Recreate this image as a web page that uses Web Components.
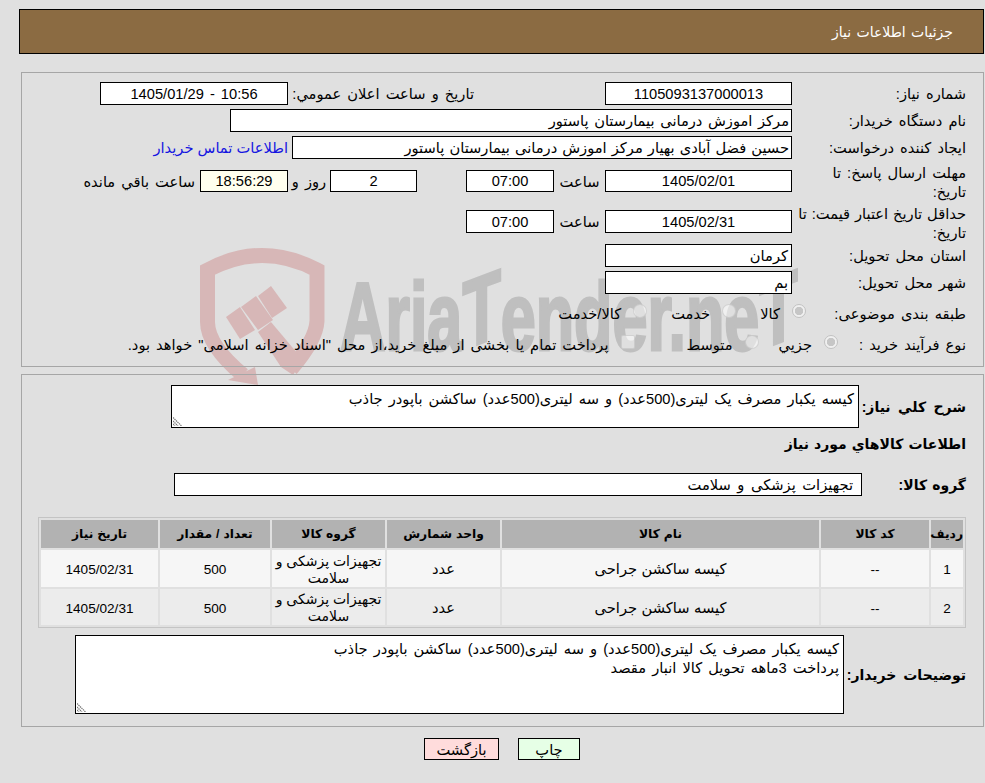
<!DOCTYPE html>
<html lang="fa"><head><meta charset="utf-8"><title>جزئیات اطلاعات نیاز</title>
<style>
html{background:#e0e0e0}
body{margin:0;width:985px;height:783px;overflow:hidden;font:14.67px "Liberation Sans","DejaVu Sans",sans-serif;color:#000}
</style></head><body>
<tender-page></tender-page>
<script>
const F=`"Liberation Sans","DejaVu Sans",sans-serif`;
class TField extends HTMLElement{
  constructor(){super();const s=this.attachShadow({mode:'open'});
  s.innerHTML=`<style>:host{display:flex;flex:none;box-sizing:border-box;height:23px;border:1px solid #000;background:#fff;align-items:center;justify-content:center;font-size:14.67px;padding:0 2px;white-space:nowrap;overflow:hidden}
  :host([start]){justify-content:flex-start}:host([cream]){background:#ffffee}</style><slot></slot>`}
}
customElements.define('t-field',TField);
class TArea extends HTMLElement{
  constructor(){super();const s=this.attachShadow({mode:'open'});
  s.innerHTML=`<style>:host{display:block;flex:none;box-sizing:border-box;border:1px solid #000;background:#fff;position:relative;padding:4px 4px 3px;line-height:19px;font-size:14.67px;white-space:nowrap}
  svg{position:absolute;left:1px;bottom:1px}</style><slot></slot>
  <svg width="10" height="10" viewBox="0 0 10 10"><path d="M0 1.5l8.5 8.5M0 5l5 5M0 8l2 2" stroke="#777" stroke-width="1.2" fill="none" stroke-dasharray="1.4 .7"/></svg>`}
}
customElements.define('t-area',TArea);
class TRadio extends HTMLElement{
  constructor(){super();const s=this.attachShadow({mode:'open'});
  s.innerHTML=`<style>:host{display:inline-flex;flex:none;align-items:center;gap:12px;font-size:14.67px;white-space:nowrap}
  i{display:block;flex:none;box-sizing:border-box;width:14px;height:14px;border-radius:50%;margin-bottom:5px;border:1px solid rgba(185,185,185,.55);background:rgba(255,255,255,.5)}
  :host([checked]) i{border:1.5px solid #c2c2c2;background:radial-gradient(circle,#c6c6c6 0 3.9px,#f0f0f0 4.5px)}
  :host([square]) i{border-radius:2px}</style><i></i><span><slot></slot></span>`}
}
customElements.define('t-radio',TRadio);
class TButton extends HTMLElement{
  constructor(){super();const s=this.attachShadow({mode:'open'});
  s.innerHTML=`<style>:host{display:flex;align-items:center;justify-content:center;box-sizing:border-box;height:22px;border:1px solid #000;background:#e6ffe6;font-size:14.67px}
  :host([red]){background:#ffdcdc}</style><slot></slot>`}
}
customElements.define('t-button',TButton);
class TWatermark extends HTMLElement{
  constructor(){super();const s=this.attachShadow({mode:'open'});
  s.innerHTML=`<style>:host{position:absolute;z-index:-1;left:195px;top:245px;width:600px;height:145px;display:block;pointer-events:none;direction:ltr;word-spacing:0}
  svg{position:absolute;left:0;top:0}
  .t{position:absolute;left:145px;top:24px;font:bold 96px/96px "Liberation Sans",sans-serif;color:#bfbfbf;-webkit-text-stroke:3px #bfbfbf;transform:scaleX(.655);transform-origin:left top;white-space:nowrap}
  b{display:inline-block;transform:skewY(-14deg);transform-origin:left bottom}</style>
  <svg width="140" height="145" viewBox="0 0 140 145"><g fill="none" stroke="#d7b7b7" stroke-width="15"><path d="M48 130Q12 100 12.5 76V25Q67 -4 122 25V76Q121 95 96 124"/></g>
  <g fill="#d7b7b7"><path d="M33 135L60 122L63 140Z"/><path d="M63 87L76 77L108 115L98 130L86 122Z"/><path d="M31 72L45 62L60 85L45 94Z"/><path d="M46 62L61 51L78 75L63 85Z"/><path d="M63 51L76 41L92 63L77 73Z"/></g></svg>
  <div class="t">Aria<b>T</b>ender.ne<b>T</b></div>`}
}
customElements.define('t-watermark',TWatermark);
class TGoods extends HTMLElement{
  constructor(){super();const s=this.attachShadow({mode:'open'});
  const rows=[1,2].map((n,i)=>`<tr class="r${i}"><td class="n">${n}</td><td class="n">--</td><td>کیسه ساکشن جراحی</td><td>عدد</td><td class="g">تجهیزات پزشکی و سلامت</td><td class="n">500</td><td class="n">1405/02/31</td></tr>`).join('');
  s.innerHTML=`<style>:host{display:block;word-spacing:.5px}
  table{width:928px;box-sizing:border-box;border-collapse:separate;border-spacing:2px;border:1px solid #c4c4c4;table-layout:fixed;font-size:14.67px}
  th{background:#b2b2b2;height:28px;padding:0;font-size:12.3px;font-weight:bold;color:#000}
  td{padding:2px 0 0;box-sizing:border-box;text-align:center;line-height:17px}
  .r0 td{background:#f6f6f6;height:37px}.r1 td{background:#ececec;height:36px}
  .n{font-size:13.6px}.g{font-size:14px;word-spacing:0}
  </style><table><colgroup><col style="width:32px"><col style="width:108px"><col style="width:317px"><col style="width:113px"><col style="width:113px"><col style="width:110px"><col style="width:117px"></colgroup>
  <tr><th>ردیف</th><th>کد کالا</th><th>نام کالا</th><th>واحد شمارش</th><th>گروه کالا</th><th>تعداد / مقدار</th><th>تاریخ نیاز</th></tr>${rows}</table>`}
}
customElements.define('t-goods',TGoods);
class TenderPage extends HTMLElement{
  constructor(){super();const s=this.attachShadow({mode:'open'});
  s.innerHTML=`<style>
  :host{display:block;direction:rtl;font-family:${F};font-size:14.67px;padding:9px 1px 0 0;color:#000;word-spacing:2px}
  .head{box-sizing:border-box;height:45px;margin-left:19px;background:#8b6b42;border:1px solid #000;color:#fff;display:flex;align-items:center;padding-right:30px;font-size:14px;word-spacing:1.5px}
  .panel{margin:18px 0 0 21px;box-sizing:border-box;border:1px solid #a6a6a6;position:relative}
  .p1{height:295px;padding:7px 17px 0 0}
  .p2{height:353px;margin-top:7px;padding:10px 17px 0 0}
  .row{display:flex;align-items:center;height:27px;white-space:nowrap;box-sizing:border-box}
  .l{width:174px;flex:none;line-height:19px;padding-top:2px;box-sizing:border-box}
  .l.two{padding-top:4px}
  .blue{color:#1515e0;margin-right:4px;word-spacing:0}
  .b{font-weight:bold;font-size:14px;color:#000;word-spacing:1.2px}
  .c{display:block;flex:none;text-align:center}
  .foot{display:flex;justify-content:center;gap:19px;margin:11px 0 0 20px}
  </style>
  <t-watermark></t-watermark>
  <div class="head">جزئیات اطلاعات نیاز</div>
  <div class="panel p1">
      <div class="row"><div class="l">شماره نیاز:</div><t-field style="width:187px">1105093137000013</t-field><div style="width:131px;flex:none"></div><div class="l" style="width:186px">تاریخ و ساعت اعلان عمومي:</div><t-field style="width:188px">10:56 - 1405/01/29</t-field></div>
      <div class="row"><div class="l">نام دستگاه خریدار:</div><t-field start style="width:562px;word-spacing:1.5px">مرکز اموزش درمانی بیمارستان پاستور</t-field></div>
      <div class="row"><div class="l">ایجاد کننده درخواست:</div><t-field start style="width:500px;word-spacing:1px">حسین فضل آبادی بهیار مرکز اموزش درمانی بیمارستان پاستور</t-field><a class="blue">اطلاعات تماس خریدار</a></div>
      <div class="row" style="height:40px"><div class="l two">مهلت ارسال پاسخ: تا<br>تاریخ:</div><t-field style="width:187px;height:22px">1405/02/01</t-field><span class="c" style="width:51px">ساعت</span><t-field style="width:88px;height:22px">07:00</t-field><div style="width:49px;flex:none"></div><t-field style="width:87px;height:22px">2</t-field><span class="c" style="width:42px">روز و</span><t-field cream style="width:88px;height:22px">18:56:29</t-field><span style="margin-right:5px">ساعت باقي مانده</span></div>
      <div class="row" style="height:41px"><div class="l two" style="word-spacing:.8px">حداقل تاریخ اعتبار قیمت: تا<br>تاریخ:</div><t-field style="width:187px">1405/02/31</t-field><span class="c" style="width:51px">ساعت</span><t-field style="width:88px">07:00</t-field></div>
      <div class="row"><div class="l">استان محل تحویل:</div><t-field start style="width:187px;padding:0 3px">کرمان</t-field></div>
      <div class="row"><div class="l">شهر محل تحویل:</div><t-field start style="width:187px;padding:0 3px">بم</t-field></div>
      <div class="row" style="height:34px;padding-top:1px"><div class="l" style="width:160px">طبقه بندی موضوعی:</div><t-radio checked>کالا</t-radio><t-radio style="margin-right:24px">خدمت</t-radio><t-radio style="margin-right:24px">کالا/خدمت</t-radio></div>
      <div class="row" style="height:26px;padding-top:2px"><div class="l" style="width:128px">نوع فرآیند خرید :</div><t-radio checked>جزیي</t-radio><t-radio style="margin-right:20px">متوسط</t-radio><t-radio square style="margin-right:52px">پرداخت تمام یا بخشی از مبلغ خرید،از محل "اسناد خزانه اسلامی" خواهد بود.</t-radio></div>
  </div>
  <div class="panel p2">
    <div class="row" style="height:43px"><div class="b" style="width:107px;flex:none;word-spacing:3.5px">شرح کلي نیاز:</div><t-area style="width:688px;height:43px">کیسه یکبار مصرف یک لیتری(500عدد) و سه لیتری(500عدد) ساکشن باپودر جاذب</t-area></div>
    <div class="row b" style="height:32px">اطلاعات کالاهاي مورد نیاز</div>
    <div class="row" style="height:23px;margin-top:13px"><div class="b" style="width:104px;flex:none">گروه کالا:</div><t-field start style="width:688px;padding:0 8px;word-spacing:2.5px">تجهیزات پزشکی و سلامت</t-field></div>
    <t-goods style="margin:21px 0 0 0"></t-goods>
    <div class="row" style="height:79px;margin-top:7px"><div class="b" style="width:122px;flex:none;word-spacing:3px">توضیحات خریدار:</div><t-area style="width:769px;height:79px">کیسه یکبار مصرف یک لیتری(500عدد) و سه لیتری(500عدد) ساکشن باپودر جاذب<br>پرداخت 3ماهه تحویل کالا انبار مقصد</t-area></div>
  </div>
  <div class="foot"><t-button style="width:62px">چاپ</t-button><t-button red style="width:75px">بازگشت</t-button></div>`}
}
customElements.define('tender-page',TenderPage);
</script></body></html>
